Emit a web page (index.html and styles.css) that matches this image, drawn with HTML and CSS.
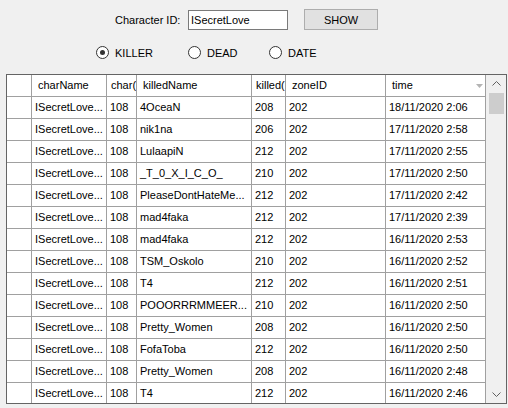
FILE: index.html
```html
<!DOCTYPE html>
<html lang="en">
<head>
    <meta charset="UTF-8">
    <title>Kill Log</title>
    <link rel="stylesheet" href="styles.css">
</head>
<body>

    <div class="search">
        <span class="search-label">Character ID:</span>
        <input class="char-input" type="text" value="ISecretLove">
        <button class="show-btn" type="button">SHOW</button>
    </div>

    <div class="modes">
        <div class="mode checked"><span class="radio"></span>KILLER</div>
        <div class="mode"><span class="radio"></span>DEAD</div>
        <div class="mode"><span class="radio"></span>DATE</div>
    </div>

    <div class="grid">
        <div class="grid-body">
            <div class="row head">
                <div class="cell"></div>
                <div class="cell">charName</div>
                <div class="cell narrow">char(</div>
                <div class="cell">killedName</div>
                <div class="cell narrow">killed(</div>
                <div class="cell">zoneID</div>
                <div class="cell sorted">time
                    <svg class="sort-glyph" width="7" height="4" viewBox="0 0 7 4"><polygon points="0,0 7,0 3.5,4" fill="#b4b4b4"/></svg>
                </div>
            </div>
            <div class="row"><div class="cell"></div><div class="cell">ISecretLove...</div><div class="cell">108</div><div class="cell">4OceaN</div><div class="cell">208</div><div class="cell">202</div><div class="cell">18/11/2020 2:06</div></div>
            <div class="row"><div class="cell"></div><div class="cell">ISecretLove...</div><div class="cell">108</div><div class="cell">nik1na</div><div class="cell">206</div><div class="cell">202</div><div class="cell">17/11/2020 2:58</div></div>
            <div class="row"><div class="cell"></div><div class="cell">ISecretLove...</div><div class="cell">108</div><div class="cell">LulaapiN</div><div class="cell">212</div><div class="cell">202</div><div class="cell">17/11/2020 2:55</div></div>
            <div class="row"><div class="cell"></div><div class="cell">ISecretLove...</div><div class="cell">108</div><div class="cell">_T_0_X_I_C_O_</div><div class="cell">210</div><div class="cell">202</div><div class="cell">17/11/2020 2:50</div></div>
            <div class="row"><div class="cell"></div><div class="cell">ISecretLove...</div><div class="cell">108</div><div class="cell">PleaseDontHateMe...</div><div class="cell">212</div><div class="cell">202</div><div class="cell">17/11/2020 2:42</div></div>
            <div class="row"><div class="cell"></div><div class="cell">ISecretLove...</div><div class="cell">108</div><div class="cell">mad4faka</div><div class="cell">212</div><div class="cell">202</div><div class="cell">17/11/2020 2:39</div></div>
            <div class="row"><div class="cell"></div><div class="cell">ISecretLove...</div><div class="cell">108</div><div class="cell">mad4faka</div><div class="cell">212</div><div class="cell">202</div><div class="cell">16/11/2020 2:53</div></div>
            <div class="row"><div class="cell"></div><div class="cell">ISecretLove...</div><div class="cell">108</div><div class="cell">TSM_Oskolo</div><div class="cell">210</div><div class="cell">202</div><div class="cell">16/11/2020 2:52</div></div>
            <div class="row"><div class="cell"></div><div class="cell">ISecretLove...</div><div class="cell">108</div><div class="cell">T4</div><div class="cell">212</div><div class="cell">202</div><div class="cell">16/11/2020 2:51</div></div>
            <div class="row"><div class="cell"></div><div class="cell">ISecretLove...</div><div class="cell">108</div><div class="cell">POOORRRMMEER...</div><div class="cell">210</div><div class="cell">202</div><div class="cell">16/11/2020 2:50</div></div>
            <div class="row"><div class="cell"></div><div class="cell">ISecretLove...</div><div class="cell">108</div><div class="cell">Pretty_Women</div><div class="cell">208</div><div class="cell">202</div><div class="cell">16/11/2020 2:50</div></div>
            <div class="row"><div class="cell"></div><div class="cell">ISecretLove...</div><div class="cell">108</div><div class="cell">FofaToba</div><div class="cell">212</div><div class="cell">202</div><div class="cell">16/11/2020 2:50</div></div>
            <div class="row"><div class="cell"></div><div class="cell">ISecretLove...</div><div class="cell">108</div><div class="cell">Pretty_Women</div><div class="cell">208</div><div class="cell">202</div><div class="cell">16/11/2020 2:48</div></div>
            <div class="row"><div class="cell"></div><div class="cell">ISecretLove...</div><div class="cell">108</div><div class="cell">T4</div><div class="cell">212</div><div class="cell">202</div><div class="cell">16/11/2020 2:46</div></div>
        </div>

        <div class="vscroll">
            <div class="scroll-arrow">
                <svg width="9" height="5" viewBox="0 0 9 5"><polyline points="0.5,4.5 4.5,0.5 8.5,4.5" fill="none" stroke="#606060" stroke-width="1"/></svg>
            </div>
            <div class="scroll-thumb"></div>
            <div class="scroll-track"></div>
            <div class="scroll-arrow">
                <svg width="9" height="5" viewBox="0 0 9 5"><polyline points="0.5,0.5 4.5,4.5 8.5,0.5" fill="none" stroke="#606060" stroke-width="1"/></svg>
            </div>
        </div>
    </div>

</body>
</html>
```

FILE: styles.css
```css
body {
    margin: 0;
    height: 408px;
    overflow: hidden;
    background-color: #f0f0f0;
    font-family: "Liberation Sans", Arial, sans-serif;
    font-size: 11px;
    color: #000;
}

.search {
    display: flex;
    align-items: center;
    height: 21px;
    padding: 9px 0 0 115px;
}

.search-label {
    width: 73px;
}

.char-input {
    box-sizing: border-box;
    width: 100px;
    height: 20px;
    margin: 1px 0 0 0;
    padding: 0 2px;
    border: 1px solid #7a7a7a;
    background: white;
    font-family: inherit;
    font-size: 11px;
    outline: none;
}

.show-btn {
    box-sizing: border-box;
    width: 74px;
    height: 21px;
    margin-left: 16px;
    padding: 0;
    background-color: #e1e1e1;
    border: 1px solid #adadad;
    font-family: inherit;
    font-size: 11px;
    color: #000;
}

.modes {
    display: flex;
    align-items: center;
    height: 13px;
    margin-top: 16px;
    padding-left: 96px;
}

.mode {
    display: flex;
    align-items: center;
    width: 92px;
}

.mode:nth-child(2) {
    width: 81px;
}

.radio {
    box-sizing: border-box;
    width: 13px;
    height: 13px;
    margin-right: 6px;
    border: 1px solid #333;
    border-radius: 50%;
    background: white;
    display: flex;
    align-items: center;
    justify-content: center;
}

.mode.checked .radio::after {
    content: "";
    width: 5px;
    height: 5px;
    border-radius: 50%;
    background: #333;
}

.grid {
    box-sizing: border-box;
    display: flex;
    width: 501px;
    height: 330px;
    margin: 15px 0 0 6px;
    border: 1px solid #646464;
    background: white;
    overflow: hidden;
}

.grid-body {
    flex: 1;
    overflow: hidden;
}

.row {
    display: grid;
    grid-template-columns: 25px 75px 30px 115px 34px 100px 1fr;
    height: 22px;
}

.cell {
    box-sizing: border-box;
    height: 22px;
    line-height: 21px;
    padding-left: 3px;
    border-right: 1px solid #a0a0a0;
    border-bottom: 1px solid #a0a0a0;
    white-space: nowrap;
    overflow: hidden;
}

.head .cell {
    padding-left: 6px;
}

.head .cell.narrow {
    padding-left: 4px;
}

.sorted {
    display: flex;
    align-items: center;
    justify-content: space-between;
}

.sort-glyph {
    margin-right: 2px;
}

.vscroll {
    width: 20px;
    display: flex;
    flex-direction: column;
    background-color: #f0f0f0;
}

.scroll-arrow {
    height: 17px;
    display: flex;
    align-items: center;
    justify-content: center;
}

.scroll-thumb {
    height: 21px;
    margin: 1px 2px 0 3px;
    background-color: #cdcdcd;
}

.scroll-track {
    flex: 1;
}
```
